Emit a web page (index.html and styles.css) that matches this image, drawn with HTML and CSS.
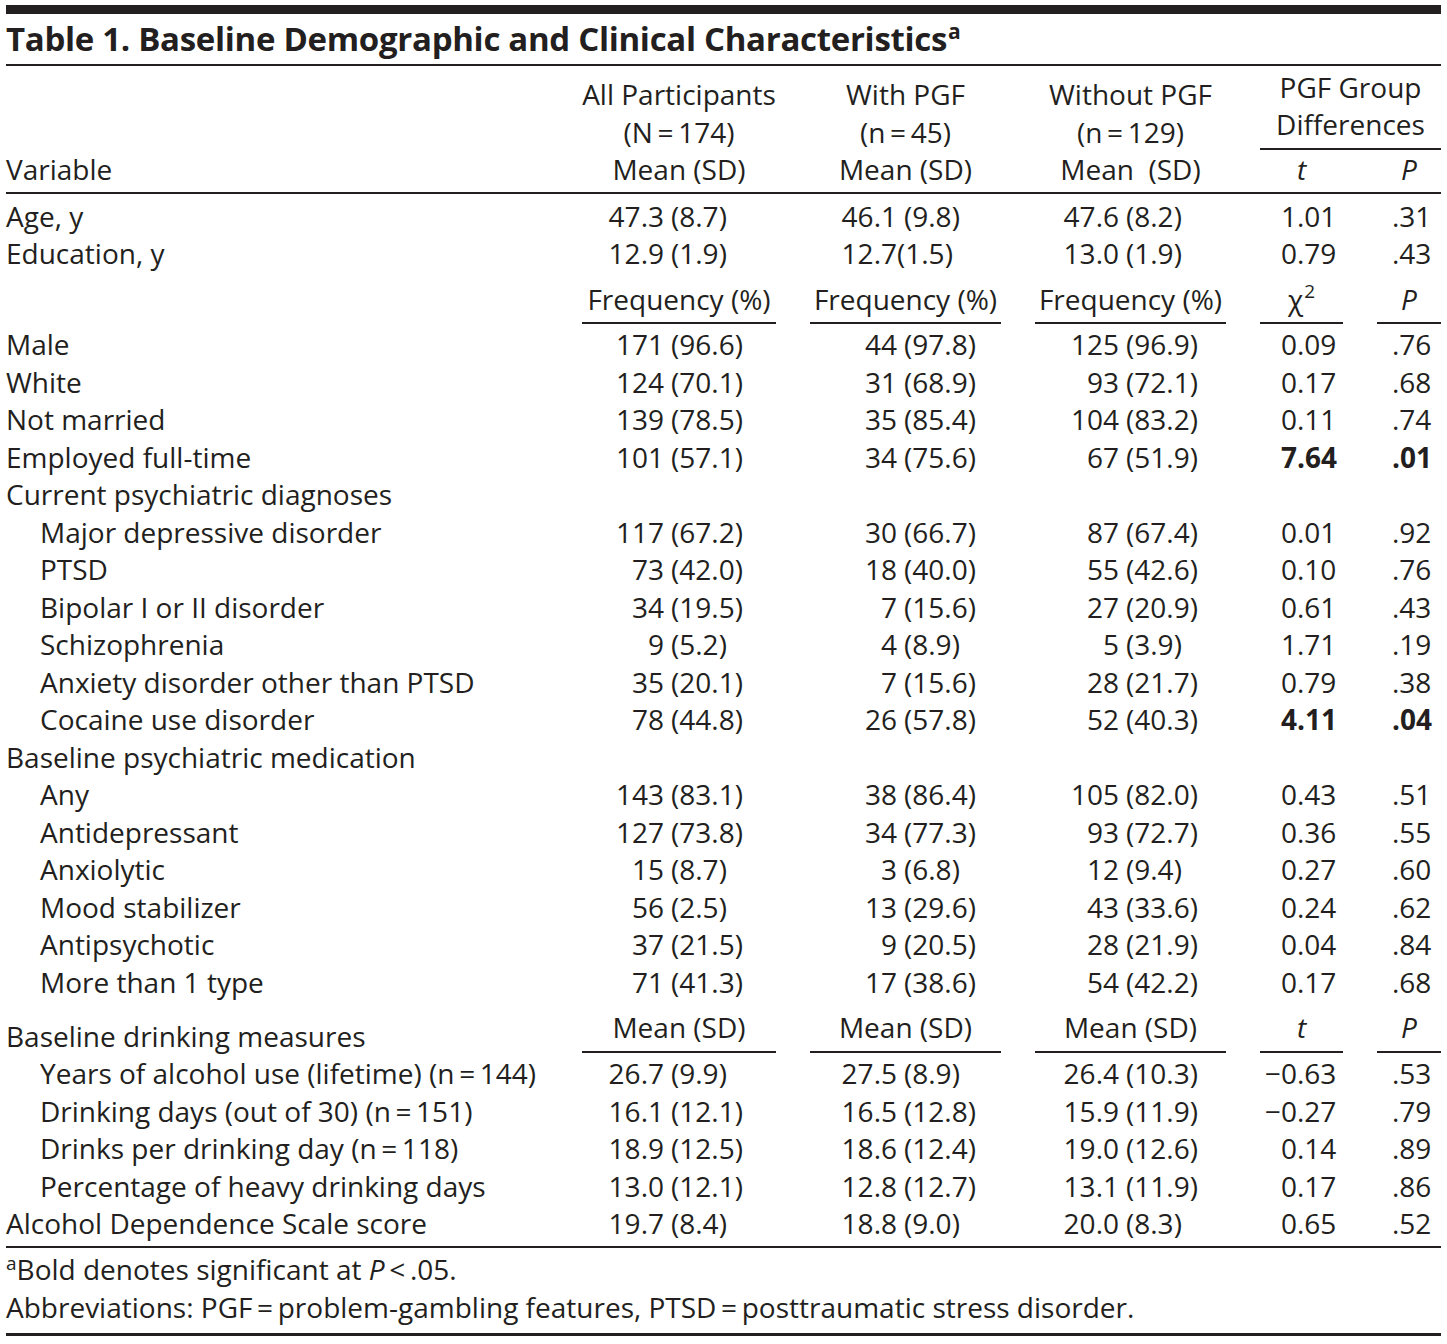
FILE: index.html
```html
<!DOCTYPE html>
<html lang="en">
<head>
<meta charset="utf-8">
<title>Table 1. Baseline Demographic and Clinical Characteristics</title>
<link rel="stylesheet" href="styles.css">
</head>
<body>
<div class="page">
  <div class="rule-thick"></div>
  <div class="title">Table 1. Baseline Demographic and Clinical Characteristics<sup class="tsup">a</sup></div>

  <div class="row thead">
    <div class="lab">Variable</div>
    <div class="hc"><div>All Participants</div><div>(N&#8201;=&#8201;174)</div><div>Mean (SD)</div></div>
    <div class="hc"><div>With PGF</div><div>(n&#8201;=&#8201;45)</div><div>Mean (SD)</div></div>
    <div class="hc"><div>Without PGF</div><div>(n&#8201;=&#8201;129)</div><div>Mean&nbsp; (SD)</div></div>
    <div class="pgf">
      <div class="pgf-title"><div>PGF Group</div><div>Differences</div></div>
      <div class="pgf-sub"><div>t</div><div>P</div></div>
    </div>
  </div>

  <div class="tbody">
    <div class="row"><div class="lab">Age, y</div><div class="c"><span class="n">47.3</span><span class="sd">(8.7)</span></div><div class="c"><span class="n">46.1</span><span class="sd">(9.8)</span></div><div class="c"><span class="n">47.6</span><span class="sd">(8.2)</span></div><div class="c"><span class="n">1</span><span class="sd">.01</span></div><div class="p">.31</div></div>
    <div class="row"><div class="lab">Education, y</div><div class="c"><span class="n">12.9</span><span class="sd">(1.9)</span></div><div class="c"><span class="n">12.7</span><span class="sd tight">(1.5)</span></div><div class="c"><span class="n">13.0</span><span class="sd">(1.9)</span></div><div class="c"><span class="n">0</span><span class="sd">.79</span></div><div class="p">.43</div></div>

    <div class="row sub">
      <div class="lab"></div>
      <div class="sh">Frequency (%)</div>
      <div class="sh">Frequency (%)</div>
      <div class="sh">Frequency (%)</div>
      <div class="sh">χ<sup class="s2">2</sup></div>
      <div class="sh it">P</div>
    </div>

    <div class="row"><div class="lab">Male</div><div class="c"><span class="n">171</span><span class="sd">(96.6)</span></div><div class="c"><span class="n">44</span><span class="sd">(97.8)</span></div><div class="c"><span class="n">125</span><span class="sd">(96.9)</span></div><div class="c"><span class="n">0</span><span class="sd">.09</span></div><div class="p">.76</div></div>
    <div class="row"><div class="lab">White</div><div class="c"><span class="n">124</span><span class="sd">(70.1)</span></div><div class="c"><span class="n">31</span><span class="sd">(68.9)</span></div><div class="c"><span class="n">93</span><span class="sd">(72.1)</span></div><div class="c"><span class="n">0</span><span class="sd">.17</span></div><div class="p">.68</div></div>
    <div class="row"><div class="lab">Not married</div><div class="c"><span class="n">139</span><span class="sd">(78.5)</span></div><div class="c"><span class="n">35</span><span class="sd">(85.4)</span></div><div class="c"><span class="n">104</span><span class="sd">(83.2)</span></div><div class="c"><span class="n">0</span><span class="sd">.11</span></div><div class="p">.74</div></div>
    <div class="row"><div class="lab">Employed full-time</div><div class="c"><span class="n">101</span><span class="sd">(57.1)</span></div><div class="c"><span class="n">34</span><span class="sd">(75.6)</span></div><div class="c"><span class="n">67</span><span class="sd">(51.9)</span></div><div class="c b"><span class="n">7</span><span class="sd">.64</span></div><div class="p b">.01</div></div>
    <div class="row"><div class="lab">Current psychiatric diagnoses</div></div>
    <div class="row"><div class="lab ind">Major depressive disorder</div><div class="c"><span class="n">117</span><span class="sd">(67.2)</span></div><div class="c"><span class="n">30</span><span class="sd">(66.7)</span></div><div class="c"><span class="n">87</span><span class="sd">(67.4)</span></div><div class="c"><span class="n">0</span><span class="sd">.01</span></div><div class="p">.92</div></div>
    <div class="row"><div class="lab ind">PTSD</div><div class="c"><span class="n">73</span><span class="sd">(42.0)</span></div><div class="c"><span class="n">18</span><span class="sd">(40.0)</span></div><div class="c"><span class="n">55</span><span class="sd">(42.6)</span></div><div class="c"><span class="n">0</span><span class="sd">.10</span></div><div class="p">.76</div></div>
    <div class="row"><div class="lab ind">Bipolar I or II disorder</div><div class="c"><span class="n">34</span><span class="sd">(19.5)</span></div><div class="c"><span class="n">7</span><span class="sd">(15.6)</span></div><div class="c"><span class="n">27</span><span class="sd">(20.9)</span></div><div class="c"><span class="n">0</span><span class="sd">.61</span></div><div class="p">.43</div></div>
    <div class="row"><div class="lab ind">Schizophrenia</div><div class="c"><span class="n">9</span><span class="sd">(5.2)</span></div><div class="c"><span class="n">4</span><span class="sd">(8.9)</span></div><div class="c"><span class="n">5</span><span class="sd">(3.9)</span></div><div class="c"><span class="n">1</span><span class="sd">.71</span></div><div class="p">.19</div></div>
    <div class="row"><div class="lab ind">Anxiety disorder other than PTSD</div><div class="c"><span class="n">35</span><span class="sd">(20.1)</span></div><div class="c"><span class="n">7</span><span class="sd">(15.6)</span></div><div class="c"><span class="n">28</span><span class="sd">(21.7)</span></div><div class="c"><span class="n">0</span><span class="sd">.79</span></div><div class="p">.38</div></div>
    <div class="row"><div class="lab ind">Cocaine use disorder</div><div class="c"><span class="n">78</span><span class="sd">(44.8)</span></div><div class="c"><span class="n">26</span><span class="sd">(57.8)</span></div><div class="c"><span class="n">52</span><span class="sd">(40.3)</span></div><div class="c b"><span class="n">4</span><span class="sd">.11</span></div><div class="p b">.04</div></div>
    <div class="row"><div class="lab">Baseline psychiatric medication</div></div>
    <div class="row"><div class="lab ind">Any</div><div class="c"><span class="n">143</span><span class="sd">(83.1)</span></div><div class="c"><span class="n">38</span><span class="sd">(86.4)</span></div><div class="c"><span class="n">105</span><span class="sd">(82.0)</span></div><div class="c"><span class="n">0</span><span class="sd">.43</span></div><div class="p">.51</div></div>
    <div class="row"><div class="lab ind">Antidepressant</div><div class="c"><span class="n">127</span><span class="sd">(73.8)</span></div><div class="c"><span class="n">34</span><span class="sd">(77.3)</span></div><div class="c"><span class="n">93</span><span class="sd">(72.7)</span></div><div class="c"><span class="n">0</span><span class="sd">.36</span></div><div class="p">.55</div></div>
    <div class="row"><div class="lab ind">Anxiolytic</div><div class="c"><span class="n">15</span><span class="sd">(8.7)</span></div><div class="c"><span class="n">3</span><span class="sd">(6.8)</span></div><div class="c"><span class="n">12</span><span class="sd">(9.4)</span></div><div class="c"><span class="n">0</span><span class="sd">.27</span></div><div class="p">.60</div></div>
    <div class="row"><div class="lab ind">Mood stabilizer</div><div class="c"><span class="n">56</span><span class="sd">(2.5)</span></div><div class="c"><span class="n">13</span><span class="sd">(29.6)</span></div><div class="c"><span class="n">43</span><span class="sd">(33.6)</span></div><div class="c"><span class="n">0</span><span class="sd">.24</span></div><div class="p">.62</div></div>
    <div class="row"><div class="lab ind">Antipsychotic</div><div class="c"><span class="n">37</span><span class="sd">(21.5)</span></div><div class="c"><span class="n">9</span><span class="sd">(20.5)</span></div><div class="c"><span class="n">28</span><span class="sd">(21.9)</span></div><div class="c"><span class="n">0</span><span class="sd">.04</span></div><div class="p">.84</div></div>
    <div class="row"><div class="lab ind">More than 1 type</div><div class="c"><span class="n">71</span><span class="sd">(41.3)</span></div><div class="c"><span class="n">17</span><span class="sd">(38.6)</span></div><div class="c"><span class="n">54</span><span class="sd">(42.2)</span></div><div class="c"><span class="n">0</span><span class="sd">.17</span></div><div class="p">.68</div></div>

    <div class="row dh">
      <div class="lab">Baseline drinking measures</div>
      <div class="sh">Mean (SD)</div>
      <div class="sh">Mean (SD)</div>
      <div class="sh">Mean (SD)</div>
      <div class="sh it">t</div>
      <div class="sh it">P</div>
    </div>

    <div class="row"><div class="lab ind">Years of alcohol use (lifetime) (n&#8201;=&#8201;144)</div><div class="c"><span class="n">26.7</span><span class="sd">(9.9)</span></div><div class="c"><span class="n">27.5</span><span class="sd">(8.9)</span></div><div class="c"><span class="n">26.4</span><span class="sd">(10.3)</span></div><div class="c"><span class="n">&#8722;0</span><span class="sd">.63</span></div><div class="p">.53</div></div>
    <div class="row"><div class="lab ind">Drinking days (out of 30) (n&#8201;=&#8201;151)</div><div class="c"><span class="n">16.1</span><span class="sd">(12.1)</span></div><div class="c"><span class="n">16.5</span><span class="sd">(12.8)</span></div><div class="c"><span class="n">15.9</span><span class="sd">(11.9)</span></div><div class="c"><span class="n">&#8722;0</span><span class="sd">.27</span></div><div class="p">.79</div></div>
    <div class="row"><div class="lab ind">Drinks per drinking day (n&#8201;=&#8201;118)</div><div class="c"><span class="n">18.9</span><span class="sd">(12.5)</span></div><div class="c"><span class="n">18.6</span><span class="sd">(12.4)</span></div><div class="c"><span class="n">19.0</span><span class="sd">(12.6)</span></div><div class="c"><span class="n">0</span><span class="sd">.14</span></div><div class="p">.89</div></div>
    <div class="row"><div class="lab ind">Percentage of heavy drinking days</div><div class="c"><span class="n">13.0</span><span class="sd">(12.1)</span></div><div class="c"><span class="n">12.8</span><span class="sd">(12.7)</span></div><div class="c"><span class="n">13.1</span><span class="sd">(11.9)</span></div><div class="c"><span class="n">0</span><span class="sd">.17</span></div><div class="p">.86</div></div>
    <div class="row"><div class="lab">Alcohol Dependence Scale score</div><div class="c"><span class="n">19.7</span><span class="sd">(8.4)</span></div><div class="c"><span class="n">18.8</span><span class="sd">(9.0)</span></div><div class="c"><span class="n">20.0</span><span class="sd">(8.3)</span></div><div class="c"><span class="n">0</span><span class="sd">.65</span></div><div class="p">.52</div></div>
  </div>

  <div class="notes">
    <div><sup class="fsup">a</sup>Bold denotes significant at <i>P</i>&#8201;&lt;&#8201;.05.</div>
    <div>Abbreviations: PGF&#8201;=&#8201;problem-gambling features, PTSD&#8201;=&#8201;posttraumatic stress disorder.</div>
  </div>
</div>
</body>
</html>
```
FILE: styles.css
```css
* { box-sizing: border-box; }

html, body {
  margin: 0;
  padding: 0;
  background: #ffffff;
}

body {
  color: #231f20;
  font-family: "Open Sans", "Noto Sans", sans-serif;
  font-size: 28px;
}

.page {
  width: 1447px;
  padding: 5px 6px 0 6px;
}

.rule-thick {
  height: 9px;
  background: #231f20;
}

.title {
  height: 52px;
  line-height: 50px;
  font-size: 33px;
  letter-spacing: -0.3px;
  font-weight: 700;
  white-space: nowrap;
  border-bottom: 2px solid #231f20;
}

.tsup {
  font-size: 21px;
  font-weight: 700;
  vertical-align: 12px;
  line-height: 0;
  letter-spacing: 0;
  margin-left: 1px;
}

.row {
  display: grid;
  grid-template-columns: 542px 194px 191px 191px 83px 64px;
  column-gap: 34px;
  line-height: 37.5px;
  min-height: 37.5px;
  white-space: nowrap;
}

.lab.ind { padding-left: 34px; }

/* header */
.thead {
  padding: 3.25px 0 3px;
  border-bottom: 2px solid #231f20;
  align-items: end;
}

.hc { text-align: center; }

.pgf { grid-column: 5 / 7; }

.pgf-title {
  line-height: 37px;
  text-align: center;
  padding-bottom: 4.5px;
  border-bottom: 2px solid #231f20;
  margin-bottom: 1.25px;
}

.pgf-sub {
  display: grid;
  grid-template-columns: 83px 64px;
  column-gap: 34px;
  text-align: center;
  font-style: italic;
  line-height: 37.5px;
}

/* body */
.tbody {
  padding: 4px 0 3.5px;
  border-bottom: 2px solid #231f20;
}

.c { display: flex; }
.c .n { flex: none; text-align: right; }
.c .sd { padding-left: 7px; }
.c .sd.tight { padding-left: 0; }

.row > .c:nth-child(2) .n { width: 82px; }
.row > .c:nth-child(3) .n { width: 87px; }
.row > .c:nth-child(4) .n { width: 84px; }
.row > .c:nth-child(5) .n { width: 37px; }
.row > .c:nth-child(5) .sd { padding-left: 0; }

.p { padding-left: 15px; }

.b { font-weight: 700; }

/* sub-headers with underlines */
.sub {
  padding-top: 8.5px;
  padding-bottom: 2.25px;
  align-items: end;
}

.sh {
  text-align: center;
  padding-bottom: 3.5px;
  border-bottom: 2px solid #231f20;
}

.dh {
  padding-top: 8px;
  align-items: end;
}

.dh .sh {
  padding-bottom: 4.25px;
  margin-bottom: 2.25px;
}

.it { font-style: italic; }

.s2 {
  font-size: 19px;
  vertical-align: 12px;
  line-height: 0;
  margin-left: 1px;
}

/* notes */
.notes {
  padding: 3px 0 7px;
  line-height: 37.5px;
  border-bottom: 3px solid #231f20;
  white-space: nowrap;
}

.fsup {
  font-size: 19px;
  vertical-align: 10px;
  line-height: 0;
}
```
